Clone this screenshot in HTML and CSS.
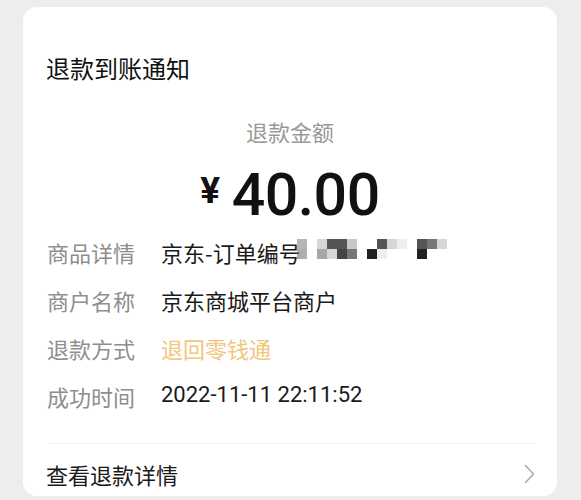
FILE: index.html
```html
<!DOCTYPE html>
<html lang="zh-CN">
<head>
<meta charset="utf-8">
<title>退款到账通知</title>
<link rel="stylesheet" href="styles.css">
</head>
<body>
<div class="card">
  <div class="title">退款到账通知</div>
  <div class="amount-label">退款金额</div>
  <div class="amount"><span class="yen">¥</span>40.00</div>
  <div class="rows">
    <div class="row">
      <span class="label">商品详情</span>
      <span class="value">京东-订单编号<span class="mosaic"><i class="c1"></i><i class="c2"></i><i></i><i></i><i class="c4"></i><i class="c5"></i><i class="c3"></i><i class="c4"></i><i class="c3"></i><i class="c6"></i><i class="c7"></i><i class="c10"></i><i></i><i></i><i></i><i class="c8"></i><i class="c3"></i><i class="c9"></i><i class="c4"></i><i></i><i class="c9"></i><i></i><i></i><i></i><i class="c3"></i><i class="c8"></i><i class="c10"></i><i></i><i class="c4"></i><i></i></span></span>
    </div>
    <div class="row">
      <span class="label">商户名称</span>
      <span class="value">京东商城平台商户</span>
    </div>
    <div class="row">
      <span class="label">退款方式</span>
      <span class="value gold">退回零钱通</span>
    </div>
    <div class="row">
      <span class="label">成功时间</span>
      <span class="value num">2022-11-11 22:11:52</span>
    </div>
  </div>
  <div class="divider"></div>
  <div class="link-row">
    <span class="link-text">查看退款详情</span>
    <svg class="chevron" width="11" height="20" viewBox="0 0 11 20"><path d="M1.5 1.5 L9.5 10 L1.5 18.5" fill="none" stroke="#a8a8a8" stroke-width="1.5" stroke-linecap="round" stroke-linejoin="round"/></svg>
  </div>
</div>
</body>
</html>
```

FILE: styles.css
```css
html, body {
  margin: 0;
  padding: 0;
}
body {
  background: #ededed;
  font-family: "Noto Sans CJK SC", "Noto Sans", sans-serif;
  color: #1a1a1a;
  width: 581px;
  height: 500px;
  overflow: hidden;
}
.card {
  margin: 7px 24px 0 23px;
  background: #ffffff;
  border-radius: 14px;
  padding: 45px 0 7px 0;
  display: flex;
  flex-direction: column;
}
.title {
  font-size: 24px;
  line-height: 32px;
  color: #111;
  padding-left: 23px;
}
.amount-label {
  margin-top: 32px;
  text-align: center;
  font-size: 22px;
  line-height: 30px;
  color: #999;
}
.amount {
  margin-top: 13px;
  text-align: center;
  font-family: Roboto, sans-serif;
  font-weight: 500;
  font-size: 59px;
  line-height: 64px;
  color: #111;
  letter-spacing: -0.5px;
}
.yen {
  font-size: 37px;
  font-weight: 700;
  vertical-align: 12px;
  margin-right: 12px;
}
.rows {
  margin-top: 10px;
  padding-left: 24px;
  display: flex;
  flex-direction: column;
  gap: 18px;
}
.row {
  display: flex;
  align-items: center;
  height: 30px;
  font-size: 22px;
  line-height: 30px;
}
.label {
  width: 114px;
  color: #8e8e8e;
  flex: none;
}
.value {
  color: #1a1a1a;
  display: flex;
  align-items: center;
}
.gold {
  color: #f2c67c;
}
.num {
  font-family: Roboto, "Noto Sans CJK SC", sans-serif;
  position: relative;
  top: -1px;
}
.mosaic {
  display: inline-grid;
  grid-template-rows: 10px 10px;
  grid-auto-flow: column;
  grid-auto-columns: 10px;
  margin-left: -4px;
  margin-top: -6px;
}
.mosaic i {
  display: block;
  background: transparent;
}
.mosaic .c1 { background: rgba(150, 150, 150, 0.7); }
.mosaic .c2 { background: rgba(120, 120, 120, 0.6); }
.mosaic .c3 { background: #555; }
.mosaic .c4 { background: #d6d6d6; }
.mosaic .c5 { background: #a6a6a6; }
.mosaic .c6 { background: #444; }
.mosaic .c7 { background: #c8c8c8; }
.mosaic .c8 { background: #222; }
.mosaic .c9 { background: #eeeeee; }
.mosaic .c10 { background: #777; }
.divider {
  margin: 32px 23px 0 25px;
  height: 1px;
  background: #f0f0f0;
}
.link-row {
  margin-top: 15px;
  padding: 0 22px 0 23px;
  display: flex;
  align-items: center;
  justify-content: space-between;
  height: 30px;
  font-size: 22px;
  line-height: 30px;
  color: #1a1a1a;
}
.chevron {
  display: block;
}
```
